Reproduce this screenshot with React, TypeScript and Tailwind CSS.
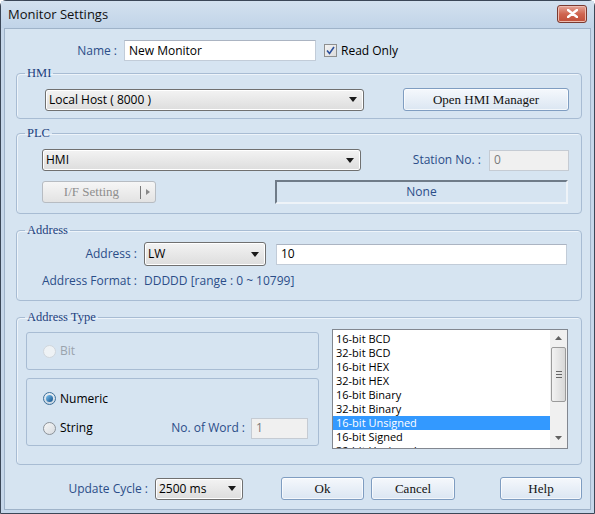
import React from 'react'

const label = 'text-[#2b4d88] text-[12px] leading-[14px]'
const serif = "font-['Liberation_Serif',serif]"

function Select({ value, className }: { value: string; className: string }) {
  return (
    <div
      className={`${className} flex items-center justify-between rounded-[3px] border border-[#707070] bg-gradient-to-b from-[#f3f3f3] to-[#dddddd] pl-[3px] pr-[6px] text-[12px] text-black shadow-[inset_0_0_0_1px_#ffffff]`}
    >
      <span>{value}</span>
      <svg width="8" height="5" viewBox="0 0 8 5">
        <path d="M0 0h8L4 5z" fill="#1a1a1a" />
      </svg>
    </div>
  )
}

function Button({ text, className }: { text: string; className: string }) {
  return (
    <button
      className={`${className} ${serif} rounded-[3px] border border-[#7f9dc1] bg-gradient-to-b from-[#f5f8fc] to-[#dbe6f2] text-[13px] text-[#111] shadow-[inset_0_0_0_1px_#ffffffaa]`}
    >
      {text}
    </button>
  )
}

function Input({ value, className, disabled }: { value: string; className: string; disabled?: boolean }) {
  return (
    <div
      className={`${className} flex items-center border px-[4px] text-[12px] ${
        disabled
          ? 'border-[#c5cbd3] bg-[#f0f0f0] text-[#7a7a7a]'
          : 'border-[#c2ccd8] border-t-[#abb4c2] bg-white text-black'
      }`}
    >
      {value}
    </div>
  )
}

function Radio({ state }: { state: 'off' | 'on' | 'disabled' }) {
  if (state === 'on') {
    return (
      <span className="flex h-[13px] w-[13px] items-center justify-center rounded-full border border-[#3c6f99] bg-gradient-to-b from-[#e8eef4] to-[#c9d6e2]">
        <span className="h-[7px] w-[7px] rounded-full bg-gradient-to-br from-[#7fc6f2] to-[#0b4f8a]" />
      </span>
    )
  }
  return (
    <span
      className={`h-[13px] w-[13px] rounded-full border ${
        state === 'disabled'
          ? 'border-[#d0d6dc] bg-[#eef2f5]'
          : 'border-[#8c9299] bg-gradient-to-br from-[#f7f7f7] to-[#d7dbe0]'
      }`}
    />
  )
}

function Group({
  title,
  className,
  inner,
  children
}: {
  title: string
  className: string
  inner: string
  children: React.ReactNode
}) {
  return (
    <fieldset className={`${className} rounded-[4px] border border-[#a8bcd3] shadow-[inset_1px_1px_0_#eef4fa]`}>
      <legend className={`${serif} ml-[8px] px-[2px] text-[12.5px] leading-[14px] text-[#1d3f7e]`}>{title}</legend>
      <div className={inner}>{children}</div>
    </fieldset>
  )
}

const items = [
  '16-bit BCD',
  '32-bit BCD',
  '16-bit HEX',
  '32-bit HEX',
  '16-bit Binary',
  '32-bit Binary',
  '16-bit Unsigned',
  '16-bit Signed',
  '32-bit Unsigned'
]

export default function App() {
  return (
    <div className="flex h-[514px] w-[595px] flex-col rounded-t-[6px] border border-[#3b4757] bg-[#c6d7ea] font-['Open_Sans',sans-serif]">
      {/* title bar */}
      <div className="flex h-[27px] items-center justify-between bg-gradient-to-b from-[#d3e1ef] to-[#c1d4e8] pl-[7px] pr-[7px]">
        <span className="text-[13px] text-[#111]">Monitor Settings</span>
        <div className="mt-[-2px] flex h-[18px] w-[30px] items-center justify-center rounded-[3px] border border-[#7a3a30] bg-gradient-to-b from-[#e4a597] via-[#cf6550] to-[#c04e38] shadow-[inset_0_0_0_1px_#eebcb0]">
          <svg width="11" height="9" viewBox="0 0 11 9">
            <path d="M1 1l9 7M10 1l-9 7" stroke="#fff" strokeWidth="2.4" strokeLinecap="round" />
          </svg>
        </div>
      </div>

      {/* body */}
      <div className="mx-[3px] mb-[3px] flex flex-1 flex-col border border-[#9fb3c9] bg-[#d6e4f1] pl-[11px] pr-[8px]">
        {/* name row */}
        <div className="mt-[11px] flex h-[21px] items-center">
          <span className={`${label} w-[101px] text-right`}>Name :</span>
          <Input value="New Monitor" className="ml-[7px] h-[21px] w-[192px]" />
          <span className="ml-[8px] flex h-[13px] w-[13px] items-center justify-center border border-[#8e8f8f] bg-gradient-to-br from-[#f4f4f4] to-[#dcdcdc]">
            <svg width="9" height="9" viewBox="0 0 9 9">
              <path d="M1 4.5l2.5 3L8 1" stroke="#2a4f9c" strokeWidth="1.6" fill="none" />
            </svg>
          </span>
          <span className="ml-[4px] text-[12px] text-black">Read Only</span>
        </div>

        {/* HMI */}
        <Group title="HMI" className="mt-[5px]" inner="pb-[7px] pl-[28px] pr-[12px] pt-[8px]">
          <div className="flex items-center justify-between">
            <Select value="Local Host ( 8000 )" className="h-[22px] w-[319px]" />
            <Button text="Open HMI Manager" className="h-[23px] w-[166px]" />
          </div>
        </Group>

        {/* PLC */}
        <Group title="PLC" className="mt-[7px]" inner="pb-[9px] pl-[25px] pr-[12px] pt-[9px]">
          <div className="flex items-center">
            <Select value="HMI" className="h-[22px] w-[319px]" />
            <span className={`${label} ml-auto`}>Station No. :</span>
            <Input value="0" disabled className="ml-[8px] h-[21px] w-[80px]" />
          </div>
          <div className="mt-[9px] flex items-center">
            <div
              className={`${serif} flex h-[22px] w-[114px] items-center rounded-[3px] border border-[#b7bcc2] bg-gradient-to-b from-[#f6f6f6] to-[#e3e3e3] text-[13px] text-[#8e8e8e]`}
            >
              <span className="flex-1 text-center">I/F Setting</span>
              <span className="h-[13px] w-px bg-[#777]" />
              <svg width="14" height="8" viewBox="0 0 14 8">
                <path d="M5 1l4 3-4 3z" fill="#888" />
              </svg>
            </div>
            <div
              className={`${label} ml-auto mr-[1px] flex h-[24px] w-[293px] items-center justify-center border-2 border-[#eef3f8] border-l-[#6f7b88] border-t-[#6f7b88] bg-[#d6e4f1]`}
            >
              None
            </div>
          </div>
        </Group>

        {/* Address */}
        <Group title="Address" className="mt-[9px]" inner="pb-[12px] pr-[14px] pt-[5px]">
          <div className="flex items-center">
            <span className={`${label} w-[120px] text-right`}>Address :</span>
            <Select value="LW" className="ml-[7px] h-[24px] w-[122px]" />
            <Input value="10" className="ml-auto h-[21px] w-[291px]" />
          </div>
          <div className="mt-[8px] flex items-center">
            <span className={`${label} w-[120px] text-right`}>Address Format :</span>
            <span className={`${label} ml-[7px]`}>DDDDD [range : 0 ~ 10799]</span>
          </div>
        </Group>

        {/* Address Type */}
        <Group title="Address Type" className="mt-[9px]" inner="pb-[15px] pl-[9px] pr-[13px] pt-[5px]">
          <div className="flex">
            <div className="mt-[3px] flex w-[293px] flex-col gap-[8px]">
              <div className="flex h-[38px] items-center rounded-[3px] border border-[#a8bcd3] pl-[16px]">
                <Radio state="disabled" />
                <span className="ml-[4px] text-[12px] text-[#9aa3ad]">Bit</span>
              </div>
              <div className="flex h-[68px] flex-col justify-center gap-[14px] rounded-[3px] border border-[#a8bcd3] pl-[16px] pr-[10px]">
                <div className="flex items-center">
                  <Radio state="on" />
                  <span className="ml-[4px] text-[12px] text-black">Numeric</span>
                </div>
                <div className="flex h-[13px] items-center">
                  <Radio state="off" />
                  <span className="ml-[4px] text-[12px] text-black">String</span>
                  <span className={`${label} ml-auto`}>No. of Word :</span>
                  <Input value="1" disabled className="ml-[6px] h-[21px] w-[57px]" />
                </div>
              </div>
            </div>
            <div className="ml-auto flex h-[120px] w-[236px] overflow-hidden border border-[#828790] bg-white">
              <div className="flex-1 overflow-hidden pt-[2px]">
                {items.map((item) => (
                  <div
                    key={item}
                    className={`h-[14px] pl-[3px] text-[11px] leading-[14px] ${
                      item === '16-bit Unsigned' ? 'bg-[#3399ff] text-white' : 'text-black'
                    }`}
                  >
                    {item}
                  </div>
                ))}
              </div>
              <div className="flex w-[17px] flex-col items-center bg-[#f0f0f0]">
                <svg className="mt-[6px]" width="7" height="4" viewBox="0 0 7 4">
                  <path d="M0 4L3.5 0L7 4z" fill="#606060" />
                </svg>
                <div className="mt-[7px] flex h-[55px] w-[15px] flex-col items-center justify-center gap-[2px] rounded-[2px] border border-[#9a9a9a] bg-gradient-to-r from-[#f2f2f2] to-[#d8d8d8]">
                  <span className="h-px w-[6px] bg-[#666]" />
                  <span className="h-px w-[6px] bg-[#666]" />
                  <span className="h-px w-[6px] bg-[#666]" />
                </div>
                <svg className="mb-[8px] mt-auto" width="7" height="4" viewBox="0 0 7 4">
                  <path d="M0 0L3.5 4L7 0z" fill="#606060" />
                </svg>
              </div>
            </div>
          </div>
        </Group>

        {/* bottom row */}
        <div className="mt-[12px] flex items-center">
          <span className={`${label} w-[132px] text-right`}>Update Cycle :</span>
          <Select value="2500 ms" className="ml-[7px] h-[22px] w-[88px]" />
          <Button text="Ok" className="ml-[38px] h-[23px] w-[83px]" />
          <Button text="Cancel" className="ml-[7px] h-[23px] w-[84px]" />
          <Button text="Help" className="ml-auto h-[23px] w-[82px]" />
        </div>
      </div>
    </div>
  )
}
